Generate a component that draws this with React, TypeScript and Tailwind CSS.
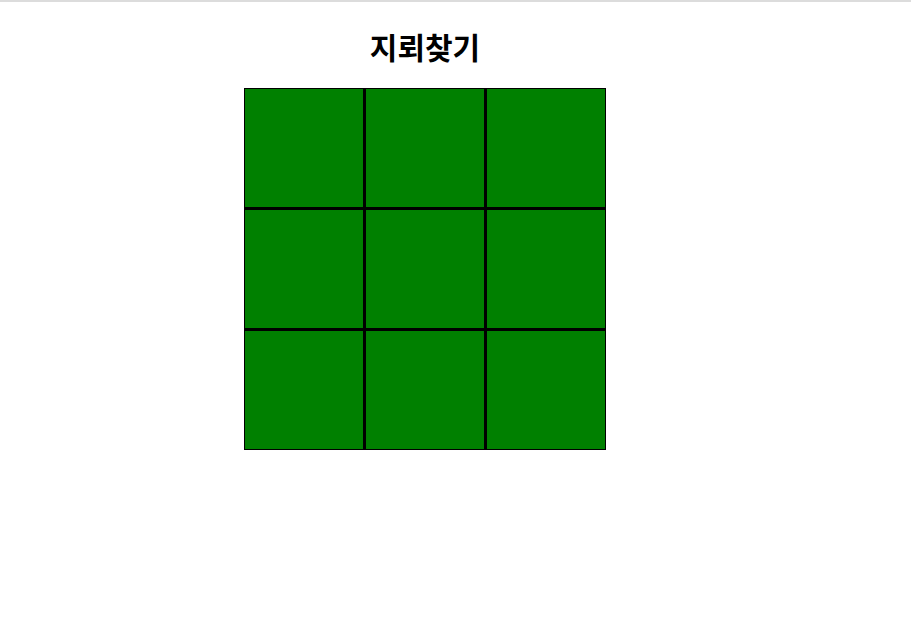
const CELLS = Array.from({ length: 9 }, (_, i) => i);

export default function App() {
  return (
    <div className="min-h-[634px] bg-white" style={{ fontFamily: '"Noto Sans CJK KR", "Noto Sans", sans-serif' }}>
      <div className="h-[2px] bg-[#dcdcdc]" />
      <div className="ml-[244px] flex w-[362px] flex-col items-center">
        <h1 className="mt-[28px] h-[32px] text-[30px] font-bold leading-[32px] text-black">지뢰찾기</h1>
        <div className="mt-[26px] grid grid-cols-3 gap-px bg-black">
          {CELLS.map((i) => (
            <div key={i} className="h-[120px] w-[120px] border border-black bg-[#008000]" />
          ))}
        </div>
      </div>
    </div>
  );
}
